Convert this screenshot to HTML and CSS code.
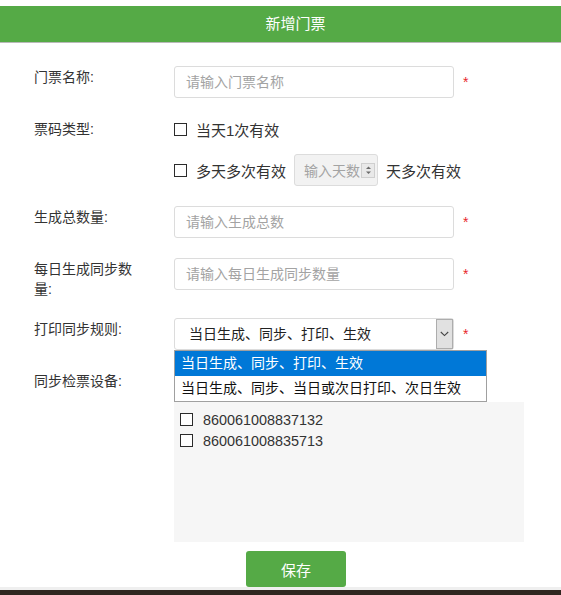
FILE: index.html
```html
<!DOCTYPE html>
<html lang="zh-CN">
<head>
<meta charset="utf-8">
<title>新增门票</title>
<link rel="stylesheet" href="styles.css">
</head>
<body>
<header class="header"><span class="title">新增门票</span></header>
<form class="form">
  <div class="row">
    <div class="label">门票名称:</div>
    <div class="control inline">
      <input class="input" type="text" placeholder="请输入门票名称">
      <span class="star">*</span>
    </div>
  </div>

  <div class="row">
    <div class="label">票码类型:</div>
    <div class="control stack">
      <label class="check-line first">
        <input class="cb" type="checkbox">
        <span>当天1次有效</span>
      </label>
      <div class="check-line second">
        <input class="cb" type="checkbox">
        <span>多天多次有效</span>
        <div class="numbox">
          <span class="num-ph">输入天数</span>
          <span class="spinner">
            <svg width="11" height="12" viewBox="0 0 11 12"><path d="M3 5 L5.5 2.5 L8 5 Z" fill="#6b6b6b"/><path d="M3 7.5 L5.5 10 L8 7.5 Z" fill="#6b6b6b"/></svg>
          </span>
        </div>
        <span>天多次有效</span>
      </div>
    </div>
  </div>

  <div class="row">
    <div class="label">生成总数量:</div>
    <div class="control inline">
      <input class="input" type="text" placeholder="请输入生成总数">
      <span class="star">*</span>
    </div>
  </div>

  <div class="row">
    <div class="label">每日生成同步数量:</div>
    <div class="control inline">
      <input class="input" type="text" placeholder="请输入每日生成同步数量">
      <span class="star">*</span>
    </div>
  </div>

  <div class="row">
    <div class="label">打印同步规则:</div>
    <div class="control inline">
      <div class="select-wrap">
        <div class="select">
          <span class="select-text">当日生成、同步、打印、生效</span>
          <span class="select-arrow">
            <svg width="9" height="6" viewBox="0 0 9 6"><path d="M0.8 1 L4.5 4.6 L8.2 1" fill="none" stroke="#444" stroke-width="1.1"/></svg>
          </span>
        </div>
        <ul class="dropdown">
          <li class="option active">当日生成、同步、打印、生效</li>
          <li class="option">当日生成、同步、当日或次日打印、次日生效</li>
        </ul>
      </div>
      <span class="star">*</span>
    </div>
  </div>

  <div class="row last">
    <div class="label">同步检票设备:</div>
    <div class="control stack">
      <div class="spacer"></div>
      <div class="devices">
        <label class="device"><input class="cb" type="checkbox"><span>860061008837132</span></label>
        <label class="device"><input class="cb" type="checkbox"><span>860061008835713</span></label>
      </div>
    </div>
  </div>

  <button class="save" type="button">保存</button>
</form>
<footer class="footer"></footer>
</body>
</html>
```

FILE: styles.css
```css
* {
  box-sizing: border-box;
}

html, body {
  margin: 0;
  padding: 0;
  background: #ffffff;
}

body {
  font-family: "Liberation Sans", "Noto Sans CJK SC", sans-serif;
  font-size: 14px;
  color: #333333;
  overflow: hidden;
}

.header {
  margin-top: 6px;
  height: 37px;
  background: #55aa46;
  border-bottom: 1px solid #b9b9b9;
  display: flex;
  align-items: center;
  justify-content: center;
  padding-left: 30px;
}

.title {
  color: #ffffff;
  font-size: 15px;
  line-height: 20px;
  margin-top: -1px;
}

.form {
  padding: 23px 0 0 34px;
  margin: 0;
}

.row {
  display: flex;
  align-items: flex-start;
  margin-bottom: 20px;
}

.row.last {
  margin-bottom: 9px;
}

.label {
  width: 100px;
  margin-right: 40px;
  line-height: 20px;
  padding-top: 1px;
  margin-bottom: -1px;
  color: #333333;
  flex-shrink: 0;
}

.control.inline {
  display: flex;
  align-items: center;
}

.control.stack {
  display: flex;
  flex-direction: column;
}

.input {
  width: 280px;
  height: 32px;
  border: 1px solid #dcdcdc;
  border-radius: 3px;
  padding: 0 11px;
  font-family: inherit;
  font-size: 14px;
  color: #333333;
  background: #ffffff;
  outline: none;
}

.input::placeholder {
  color: #a3a3a3;
}

.star {
  color: #e8262a;
  margin-left: 9px;
  font-size: 14px;
  line-height: 32px;
  font-family: "Liberation Sans", sans-serif;
}

.check-line {
  display: flex;
  align-items: center;
  color: #333333;
  font-size: 15px;
}

.check-line.first {
  height: 22px;
  margin-bottom: 14px;
}

.check-line.second {
  height: 32px;
}

.cb {
  appearance: none;
  -webkit-appearance: none;
  width: 13px;
  height: 13px;
  margin: 0 9px 0 0;
  border: 1px solid #2b2b2b;
  background: #ffffff;
  border-radius: 0;
  flex-shrink: 0;
}

.numbox {
  width: 84px;
  height: 32px;
  margin: 0 8px;
  border: 1px solid #dcdcdc;
  border-radius: 3px;
  background: #f2f2f2;
  display: flex;
  align-items: center;
  padding: 0 1px 0 9px;
  font-size: 14px;
}

.num-ph {
  color: #a3a3a3;
  flex: 1;
  white-space: nowrap;
  overflow: hidden;
}

.spinner {
  width: 14px;
  height: 15px;
  background: #e9e9e9;
  border: 1px solid #cfcfcf;
  display: flex;
  align-items: center;
  justify-content: center;
  margin-right: 1px;
  flex-shrink: 0;
}

.spinner svg {
  display: block;
}

.select-wrap {
  position: relative;
}

.select {
  width: 280px;
  height: 32px;
  border: 1px solid #dcdcdc;
  border-radius: 3px;
  display: flex;
  align-items: center;
  padding: 0 0 0 14px;
  background: #ffffff;
  color: #222222;
}

.select-text {
  flex: 1;
  line-height: 20px;
}

.select-arrow {
  width: 17px;
  height: 30px;
  background: #e1e1e1;
  border: 1px solid #adadad;
  display: flex;
  align-items: center;
  justify-content: center;
}

.select-arrow svg {
  display: block;
}

.dropdown {
  position: absolute;
  top: 32px;
  left: 0;
  width: 313px;
  margin: 0;
  padding: 0;
  list-style: none;
  background: #ffffff;
  border: 1px solid #a0a0a0;
  z-index: 10;
}

.option {
  height: 25px;
  line-height: 25px;
  padding-left: 6px;
  color: #111111;
  white-space: nowrap;
}

.option.active {
  background: #0078d7;
  color: #ffffff;
}

.spacer {
  height: 32px;
}

.devices {
  width: 350px;
  height: 140px;
  background: #f6f6f6;
  padding: 7px 6px;
  display: flex;
  flex-direction: column;
}

.device {
  display: flex;
  align-items: center;
  height: 21px;
  color: #333333;
  font-size: 14.4px;
}

.device .cb {
  margin-right: 10px;
}

.save {
  display: block;
  margin-left: 212px;
  width: 100px;
  height: 36px;
  border: none;
  border-radius: 3px;
  background: #55aa46;
  color: #ffffff;
  font-family: inherit;
  font-size: 15px;
}

.footer {
  height: 40px;
  border-top: 3px solid #efefef;
  background: #2f261f;
}
```
